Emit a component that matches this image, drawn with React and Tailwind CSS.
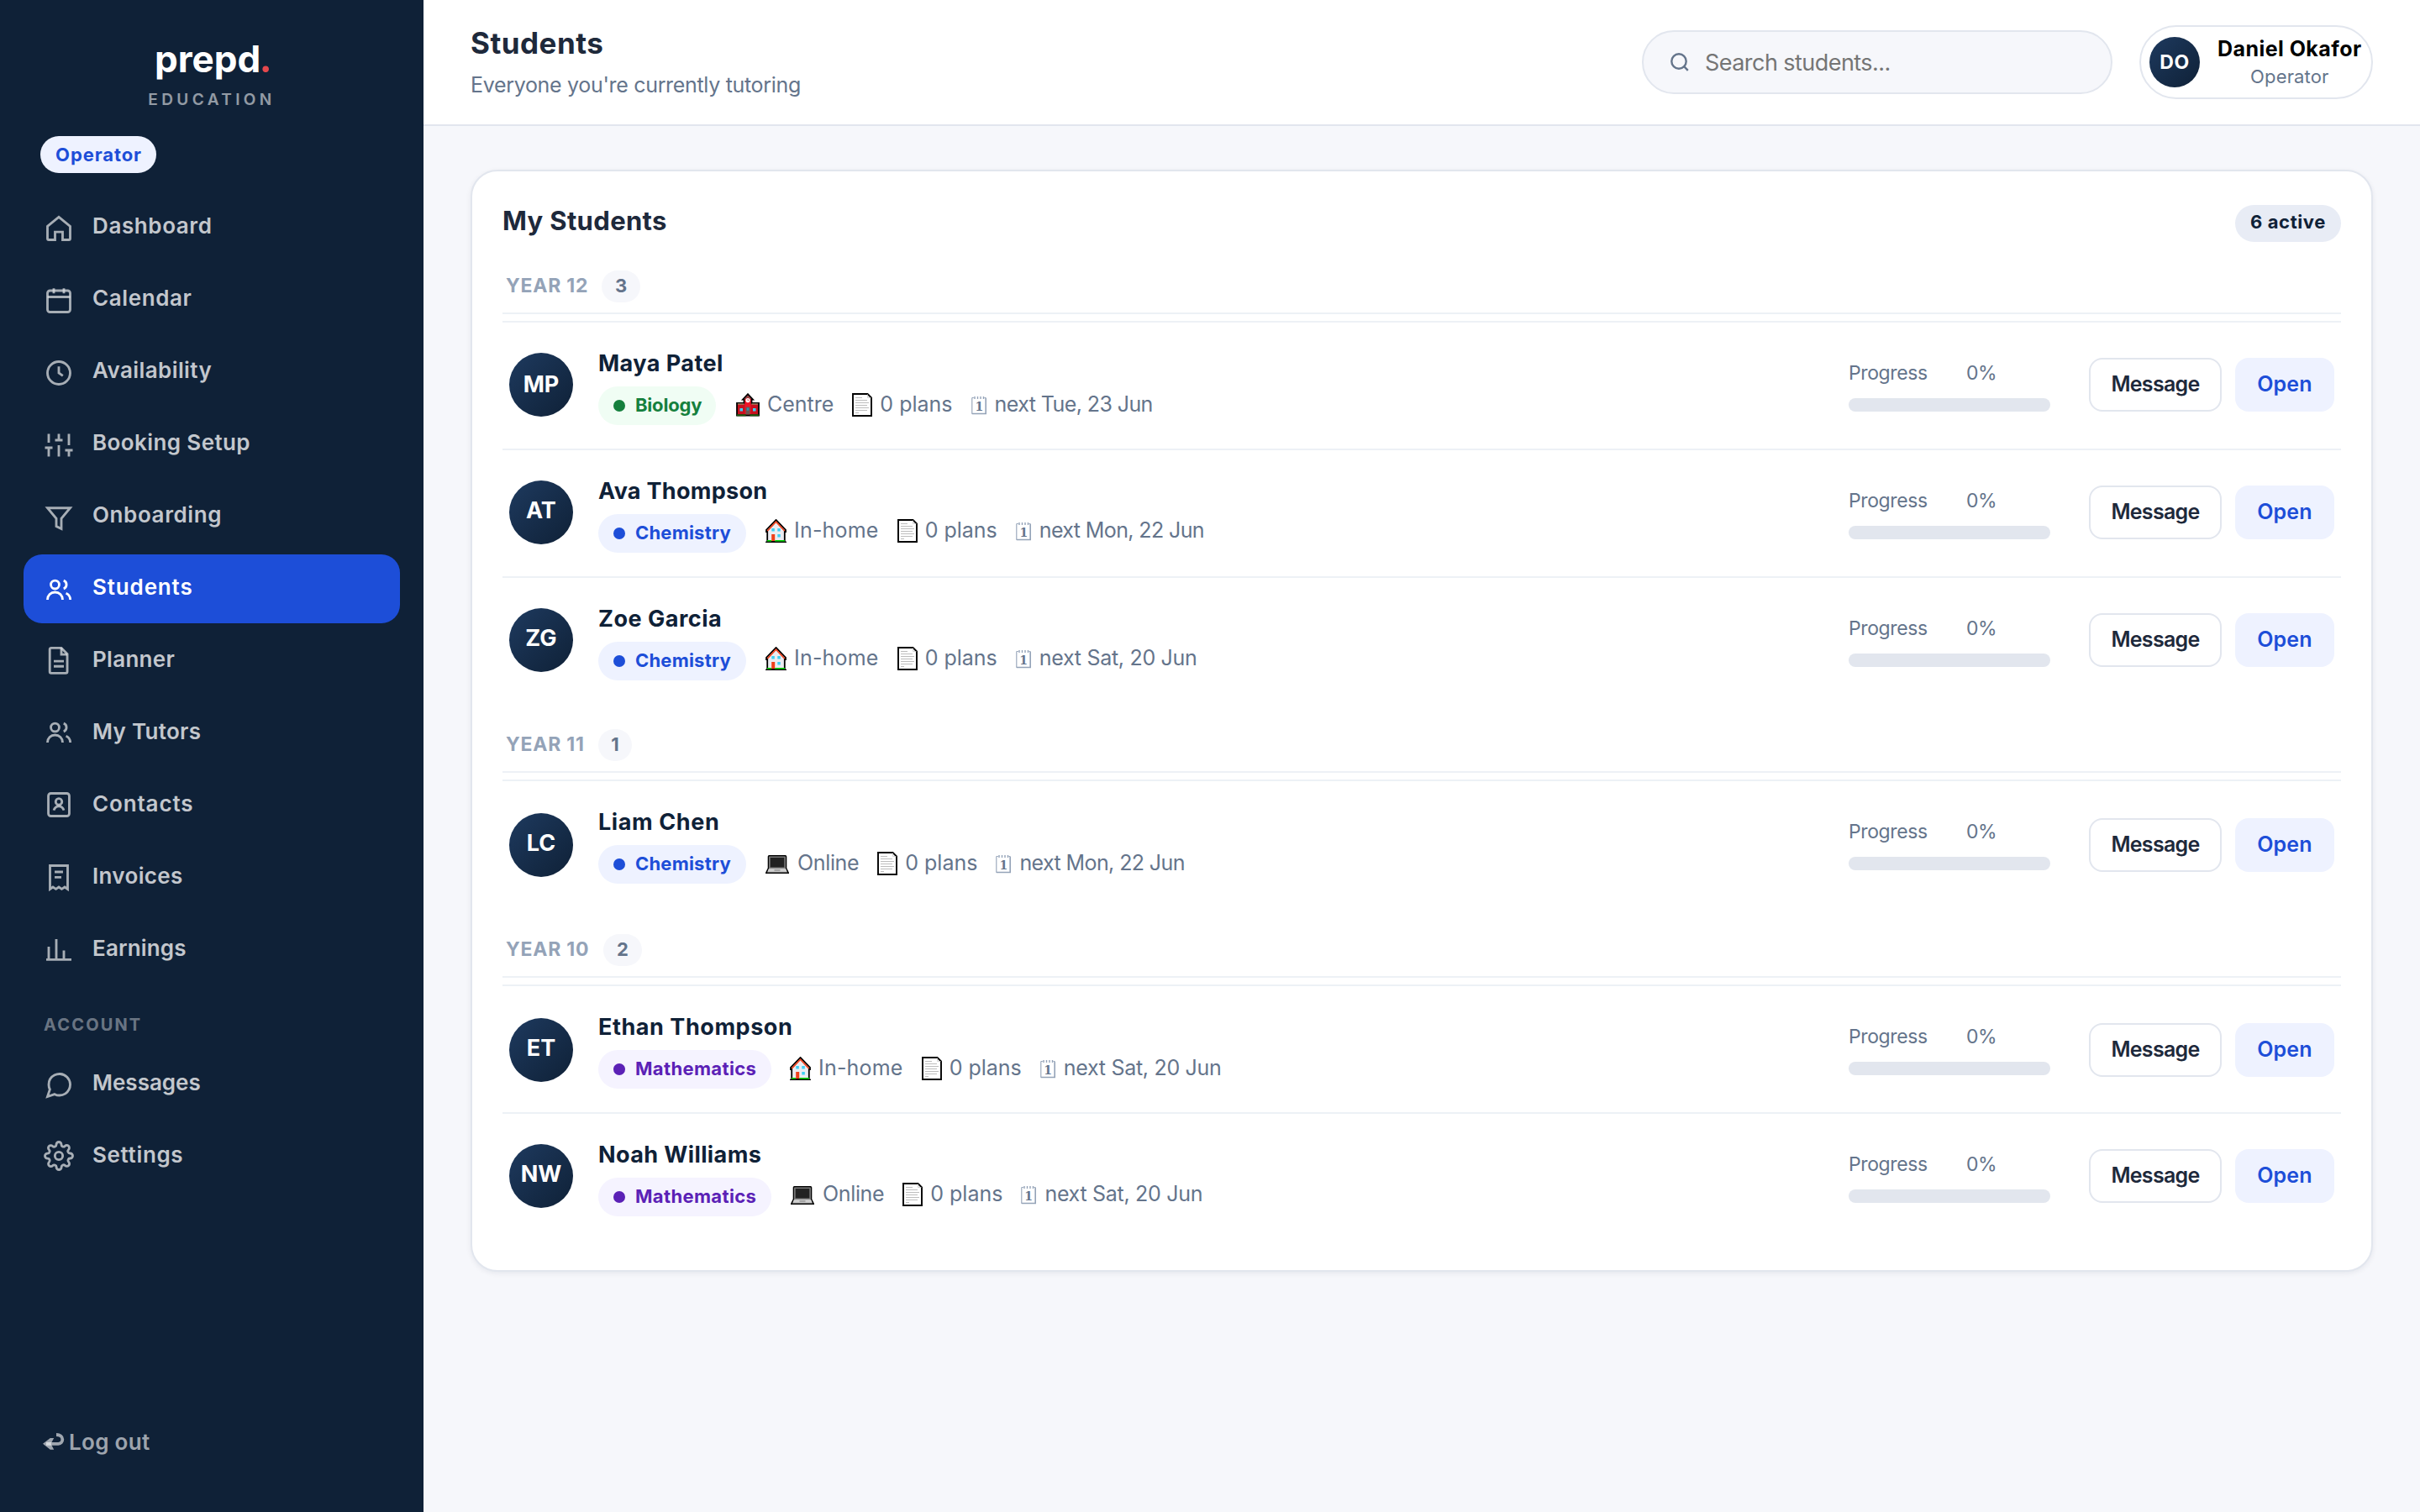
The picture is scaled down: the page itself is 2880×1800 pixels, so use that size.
const NAV = [
  { label: "Dashboard", icon: "home", nudge: "mt-[2px]", tracking: "tracking-[0.6px]" },
  { label: "Calendar", icon: "calendar", nudge: "mt-[2px]", tracking: "tracking-[0.6px]" },
  { label: "Availability", icon: "clock", nudge: "mt-[2px]", tracking: "tracking-[0.4px]" },
  { label: "Booking Setup", icon: "sliders", nudge: "mt-[2px]", tracking: "tracking-[0.4px]" },
  { label: "Onboarding", icon: "filter", nudge: "mt-[2px]", tracking: "tracking-[0.6px]" },
  { label: "Students", icon: "users", nudge: "mt-[2px]", tracking: "tracking-[0.85px]", active: true },
  { label: "Planner", icon: "file", nudge: "-mt-[2px]", tracking: "tracking-[0.3px]" },
  { label: "My Tutors", icon: "users", nudge: "-mt-[2px]", tracking: "tracking-[0.3px]" },
  { label: "Contacts", icon: "contact", nudge: "-mt-[2px]", tracking: "tracking-[0.85px]" },
  { label: "Invoices", icon: "receipt", nudge: "-mt-[2px]", tracking: "tracking-[0.35px]" },
  { label: "Earnings", icon: "chart", nudge: "-mt-[2px]", tracking: "tracking-[0.15px]" },
];

const ACCOUNT_NAV = [
  { label: "Messages", icon: "message", nudge: "mt-[2px]", tracking: "tracking-normal" },
  { label: "Settings", icon: "gear", nudge: "-mt-[2px]", tracking: "tracking-[0.65px]" },
];

const ICONS = {
  home: <path d="M3 10.3 12 2.9l9 7.4V20a1 1 0 0 1-1 1h-5v-6.3H9V21H4a1 1 0 0 1-1-1z" />,
  calendar: (
    <>
      <rect x="3" y="4" width="18" height="17" rx="2" />
      <path d="M3 9h18M8 2.2v4M16 2.2v4" />
    </>
  ),
  clock: (
    <>
      <circle cx="12" cy="12" r="9" />
      <path d="M12 6.8V12l3.2 2.2" />
    </>
  ),
  sliders: <path d="M4 21v-7M4 10V3M12 21v-9M12 8V3M20 21v-5M20 12V3M1 14h6M9 8h6M17 16h6" />,
  filter: <path d="M3 4.5h18l-7 8.4V21l-4-2v-6.1z" />,
  users: (
    <>
      <circle cx="9" cy="8" r="3.3" />
      <path d="M3 20c0-3.4 2.6-6 6-6s6 2.6 6 6M15.8 4.8a3.4 3.4 0 0 1 0 6.4M17.7 14.8c2 .8 3.4 2.8 3.4 5.2" />
    </>
  ),
  file: (
    <>
      <path d="M14 2.2H6a1.2 1.2 0 0 0-1.2 1.2V21A1.2 1.2 0 0 0 6 22.2h11.5a1.2 1.2 0 0 0 1.2-1.2V7z" />
      <path d="M14 2.2v5.2h4.7M8 12.7h8M8 16.8h8" />
    </>
  ),
  contact: (
    <>
      <rect x="3.7" y="3" width="16.6" height="18" rx="2" />
      <circle cx="12" cy="9.6" r="2.5" />
      <path d="M8 16.4c.7-2.2 2.2-3.2 4-3.2s3.3 1 4 3.2" />
    </>
  ),
  receipt: <path d="M5 3h14v18.6L16.7 20l-2.4 1.6L12 20l-2.3 1.6L7.3 20 5 21.6zM8.7 8h6.6M8.7 12.2H14" />,
  chart: <path d="M2 20.2h20M4 20.2V10M10 20.2V4M16 20.2V13" />,
  message: (
    <path d="M21 11.5a8.38 8.38 0 0 1-.9 3.8 8.5 8.5 0 0 1-7.6 4.7 8.38 8.38 0 0 1-3.8-.9L3 21l1.9-5.7a8.38 8.38 0 0 1-.9-3.8 8.5 8.5 0 0 1 4.7-7.6 8.38 8.38 0 0 1 3.8-.9h.5a8.48 8.48 0 0 1 8 8v.5z" />
  ),
  gear: (
    <>
      <circle cx="12" cy="12" r="3.1" />
      <path d="M19.4 15a1.65 1.65 0 0 0 .33 1.82l.06.06a2 2 0 0 1 0 2.83 2 2 0 0 1-2.83 0l-.06-.06a1.65 1.65 0 0 0-1.82-.33 1.65 1.65 0 0 0-1 1.51V21a2 2 0 0 1-2 2 2 2 0 0 1-2-2v-.09A1.65 1.65 0 0 0 9 19.4a1.65 1.65 0 0 0-1.82.33l-.06.06a2 2 0 0 1-2.83 0 2 2 0 0 1 0-2.83l.06-.06a1.65 1.65 0 0 0 .33-1.82 1.65 1.65 0 0 0-1.51-1H3a2 2 0 0 1-2-2 2 2 0 0 1 2-2h.09A1.65 1.65 0 0 0 4.6 9a1.65 1.65 0 0 0-.33-1.82l-.06-.06a2 2 0 0 1 0-2.83 2 2 0 0 1 2.83 0l.06.06a1.65 1.65 0 0 0 1.82.33H9a1.65 1.65 0 0 0 1-1.51V3a2 2 0 0 1 2-2 2 2 0 0 1 2 2v.09a1.65 1.65 0 0 0 1 1.51 1.65 1.65 0 0 0 1.82-.33l.06-.06a2 2 0 0 1 2.83 0 2 2 0 0 1 0 2.83l-.06.06a1.65 1.65 0 0 0-.33 1.82V9a1.65 1.65 0 0 0 1.51 1H21a2 2 0 0 1 2 2 2 2 0 0 1-2 2h-.09a1.65 1.65 0 0 0-1.51 1z" />
    </>
  ),
};

const SUBJECTS = {
  Biology: { pill: "w-[140px] bg-[#f0fdf4] text-[#15803d] tracking-[-0.2px]", dot: "bg-[#15803d]" },
  Chemistry: { pill: "w-[176px] bg-[#eef2ff] text-[#1d4ed8] tracking-[0.2px]", dot: "bg-[#1d4ed8]" },
  Mathematics: { pill: "w-[206px] bg-[#f5f3ff] text-[#5b21b6] tracking-[0.35px]", dot: "bg-[#5b21b6]" },
};

const PLACE_TRACKING = {
  Centre: "tracking-normal",
  "In-home": "tracking-[0.2px]",
  Online: "tracking-[-0.35px]",
};

const GROUPS = [
  {
    year: "YEAR 12",
    labelWidth: "w-[114px]",
    countWidth: "w-[46px]",
    margin: "",
    students: [
      { name: "Maya Patel", initials: "MP", subject: "Biology", place: "Centre", next: "next Tue, 23 Jun", tracking: "tracking-[0.45px]", nextTracking: "tracking-[-0.58px]", avatar: "mt-[36px] pb-0", meta: "ml-[24px] mt-px", buttons: "mt-[42px]" },
      { name: "Ava Thompson", initials: "AT", subject: "Chemistry", place: "In-home", next: "next Mon, 22 Jun", tracking: "tracking-[0.3px]", nextTracking: "tracking-[-0.62px]", avatar: "mt-[36px] pb-[3px]", meta: "ml-[23px] -mt-px", buttons: "mt-[42px]" },
      { name: "Zoe Garcia", initials: "ZG", subject: "Chemistry", place: "In-home", next: "next Sat, 20 Jun", tracking: "tracking-[0.5px]", nextTracking: "tracking-[-0.3px]", avatar: "mt-[36px] pb-[3px]", meta: "ml-[23px] -mt-px", buttons: "mt-[42px]" },
    ],
  },
  {
    year: "YEAR 11",
    labelWidth: "w-[110px]",
    countWidth: "w-[40px]",
    margin: "mt-[30px]",
    students: [
      { name: "Liam Chen", initials: "LC", subject: "Chemistry", place: "Online", next: "next Mon, 22 Jun", tracking: "tracking-[0.6px]", nextTracking: "tracking-[-0.6px]", avatar: "mt-[38px] pb-[3px]", meta: "ml-[23px] mt-px", buttons: "mt-[44px]" },
    ],
  },
  {
    year: "YEAR 10",
    labelWidth: "w-[116px]",
    countWidth: "w-[46px]",
    margin: "mt-[32px]",
    students: [
      { name: "Ethan Thompson", initials: "ET", subject: "Mathematics", place: "In-home", next: "next Sat, 20 Jun", tracking: "tracking-[0.55px]", nextTracking: "tracking-[-0.3px]", avatar: "mt-[38px] pb-[3px]", meta: "ml-[22px] mt-px", buttons: "mt-[44px]" },
      { name: "Noah Williams", initials: "NW", subject: "Mathematics", place: "Online", next: "next Sat, 20 Jun", tracking: "tracking-[0.4px]", nextTracking: "tracking-[-0.3px]", avatar: "mt-[36px] pb-[3px]", meta: "ml-[23px] -mt-px", buttons: "mt-[42px]" },
    ],
  },
];

function SchoolIcon() {
  return (
    <svg className="mr-[9px] h-7 w-7 shrink-0" viewBox="0 0 28 28">
      <path d="M1 12h8.500V7.500H8L14 1.200l6 6.300h-1.500V12H27v14.500H1z" fill="#c8101e" stroke="#000" strokeWidth="1.8" />
      <path d="M2 13h7.500M18.500 13H26" stroke="#a08060" strokeWidth="1.5" />
      <rect x="10.5" y="6.5" width="7" height="18.500" fill="#ee1428" />
      <path d="M10.500 7 14 3.300 17.500 7" fill="#a33" stroke="#666" strokeWidth="0.8" />
      <circle cx="14" cy="8.6" r="2.6" fill="#fff" />
      <path d="M14 7.200v1.600h1.200" fill="none" stroke="#c33" strokeWidth="0.8" />
      <path d="M4.500 18h3.500v3.500H4.500zM20 18h3.500v3.500H20z" fill="#3fd0f5" />
      <rect x="11.5" y="16.5" width="5" height="9" fill="#6b5550" />
      <rect x="12.7" y="17.5" width="2.6" height="3.2" fill="#2f8fae" />
      <path d="M1 26.200h10.500M16.500 26.200H27" stroke="#1c5a10" strokeWidth="2" />
    </svg>
  );
}

function HouseIcon() {
  return (
    <svg className="mr-[9px] h-7 w-[25px] shrink-0" viewBox="0 0 25 28">
      <path d="M12.5 1 24 12.8V15h-1.2v12H2.2V15H1v-2.2z" fill="#ececf2" stroke="#000" strokeWidth="1.8" />
      <path d="M2.3 14 12.5 3.2 22.7 14" fill="none" stroke="#f0401c" strokeWidth="1.7" />
      <path d="M7.3 11h3.5v3.6H7.3zM14.3 11h3.5v3.6h-3.5zM14.3 18h3.5v3.6h-3.5z" fill="#3fd0f5" />
      <rect x="7.2" y="18" width="4" height="8" fill="#f0401c" />
      <path d="M2 26h5M11.3 26H23" stroke="#00d000" strokeWidth="2" />
      <path d="M0 27.3h25" stroke="#000" strokeWidth="1.3" />
    </svg>
  );
}

function LaptopIcon() {
  return (
    <svg className="mt-[2px] mr-[10px] h-[22px] w-7 shrink-0" viewBox="0 0 28 22">
      <path d="M3.5 1.8q0-.9.9-.9h19.2q.9 0 .9.9v13.7l2.7 5.7H.8l2.700-5.700z" fill="#b9b9b9" stroke="#000" strokeWidth="1.6" />
      <rect x="4.3" y="1.7" width="19.4" height="14" fill="#777" />
      <rect x="5.7" y="3" width="16.6" height="11.5" fill="#222" />
      <path d="M3.7 16.6h20.6l1.2 3h-23z" fill="#cfcfcf" />
      <path d="M10.5 18h7" stroke="#888" strokeWidth="1.2" />
    </svg>
  );
}

function PageIcon() {
  return (
    <svg className="mr-[9px] h-7 w-6 shrink-0" viewBox="0 0 24 28">
      <path d="M1 1h17.500L23 5.500V27H1z" fill="#fff" stroke="#000" strokeWidth="1.9" />
      <path d="M18.500 1.500v4h4" fill="none" stroke="#ccc" strokeWidth="0.8" />
      <path d="M4 5.500h8M4 8.500h14M4 11.500h16M4 14.500h14M4 17.500h16M4 20.500h14M4 23.500h4" stroke="#bdbdbd" strokeWidth="1" />
    </svg>
  );
}

function NotepadIcon() {
  return (
    <svg className="mt-[2px] mr-[10px] h-[22px] w-[18px] shrink-0 overflow-visible" viewBox="0 0 18 22" fill="none" stroke="#94a3b8">
      <path d="M.8 1.500v19.300M.8 1.500h2M15.500 1.500h1.500" strokeWidth="1.1" />
      <path d="M.8 20.500h16.400V1.500" strokeWidth="1.6" />
      <path d="M4 0v3M7.500 0v3M11 0v3M14.500 0v3" strokeWidth="1.4" />
      <text x="9" y="16.5" textAnchor="middle" fill="#64748b" stroke="none" className="font-['DejaVu_Serif',serif] text-[14px] font-bold">1</text>
    </svg>
  );
}

function NavIcon({ name, className }) {
  return (
    <svg viewBox="0 0 24 24" fill="none" stroke="currentColor" strokeWidth="1.9" className={className}>
      {ICONS[name]}
    </svg>
  );
}

function NavItem({ item }) {
  const state = item.active ? "bg-[#1d4ed8] text-white" : "text-white/75";
  return (
    <a className={`flex h-[82px] items-center gap-[22px] rounded-[22px] pl-6 ${state}`}>
      <NavIcon name={item.icon} className={`h-9 w-9 shrink-0 ${item.nudge} ${item.active ? "" : "opacity-85"}`} />
      <span className={`-mt-[6px] text-[26px] font-semibold ${item.tracking}`}>{item.label}</span>
    </a>
  );
}

function Sidebar() {
  return (
    <aside className="flex h-[1800px] w-[504px] shrink-0 flex-col bg-[#0f2137] px-7">
      <div className="mt-[44px] h-[52px] pl-[2px] text-center text-[44px] leading-[52px] font-bold text-white">
        prepd<span className="font-['Lato'] text-[50px] leading-[40px] text-[#e5484d]">.</span>
      </div>
      <div className="mt-[11px] text-center text-[19px] leading-6 font-semibold tracking-[4.4px] text-white/55">EDUCATION</div>
      <div className="mt-[31px] ml-5 flex h-11 w-[138px] items-center justify-center rounded-full bg-[#eef2ff] pl-px text-[22px] font-bold tracking-[0.9px] text-[#1d4ed8]">
        Operator
      </div>
      <nav className="mt-6 flex flex-col gap-1">
        {NAV.map((item) => (
          <NavItem key={item.label} item={item} />
        ))}
      </nav>
      <div className="mt-[36px] mb-[18px] pl-6 text-[20px] leading-6 font-bold tracking-[2.15px] text-white/40">ACCOUNT</div>
      <nav className="flex flex-col gap-1">
        {ACCOUNT_NAV.map((item) => (
          <NavItem key={item.label} item={item} />
        ))}
      </nav>
      <a className="mt-auto mb-[65px] flex items-center gap-[5px] pl-[23px] text-[26px] leading-9 font-semibold tracking-[0.3px] text-white/60">
        <svg viewBox="0 0 26 20" className="-mt-[3px] h-5 w-[26px]">
          <path d="M4 12.8h14.5c2.8 0 4.8-2.2 4.8-5.2 0-3.400-2.900-5.600-7.300-5.600" fill="none" stroke="currentColor" strokeWidth="3.8" />
          <path d="M0 12.8 8.800 6h4.400l-3.700 6.800 3.700 6.900H8.800z" fill="currentColor" />
        </svg>
        Log out
      </a>
    </aside>
  );
}

function Header() {
  return (
    <header className="flex h-[150px] items-start border-b-2 border-[#e2e6ee] bg-white px-14">
      <div className="flex-1 pt-[29px]">
        <h1 className="text-[35px] leading-[44px] font-bold tracking-[0.5px] text-[#1e293b]">Students</h1>
        <p className="mt-[10px] text-[25px] leading-9 tracking-[-0.32px] text-[#64748b]">Everyone you're currently tutoring</p>
      </div>
      <div className="mt-9 flex h-[76px] w-[560px] items-center rounded-full border-2 border-[#e2e6ee] bg-[#f6f7fb] pl-[31px]">
        <svg viewBox="0 0 24 24" className="h-6 w-6" fill="none" stroke="#64748b" strokeWidth="2.4">
          <circle cx="11" cy="11" r="8.7" />
          <path d="m17.2 17.2 4.6 4.6" />
        </svg>
        <span className="mt-[2px] ml-[18px] text-[27px] tracking-[-0.55px] text-[#757575]">Search students...</span>
      </div>
      <div className="mt-[30px] ml-8 flex h-[88px] w-[278px] items-center rounded-full border-2 border-[#e2e6ee] bg-white pl-[10px]">
        <div className="flex h-[60px] w-[60px] shrink-0 items-center justify-center rounded-full bg-linear-135 from-[#1e3a5f] to-[#0f2137] text-[23px] font-bold tracking-[0.5px] text-white">
          DO
        </div>
        <div className="ml-[21px] text-center whitespace-nowrap">
          <div className="text-[25px] leading-8 font-bold tracking-[0.45px] text-black">Daniel Okafor</div>
          <div className="mt-px text-[22px] leading-8 tracking-[0.15px] text-[#64748b]">Operator</div>
        </div>
      </div>
    </header>
  );
}

function StudentRow({ student }) {
  const subject = SUBJECTS[student.subject];
  return (
    <div className="flex h-[152px] items-start border-t-2 border-[#edf1f6] px-2">
      <div className={`flex h-[76px] w-[76px] shrink-0 items-center justify-center rounded-full bg-linear-135 from-[#1e3a5f] to-[#0f2137] text-[27px] font-bold text-white ${student.avatar}`}>
        {student.initials}
      </div>
      <div className="ml-[30px] flex-1 pt-[31px]">
        <div className={`text-[27px] leading-9 font-bold text-[#0f2137] ${student.tracking}`}>{student.name}</div>
        <div className="mt-[9px] flex items-start text-[25px] whitespace-nowrap text-[#64748b]">
          <span className={`flex h-[46px] items-center rounded-full pb-px pl-[18px] text-[22px] font-bold ${subject.pill}`}>
            <i className={`mt-px mr-[12px] h-[14px] w-[14px] rounded-full ${subject.dot}`} />
            {student.subject}
          </span>
          <div className={`flex h-[42px] items-center gap-[22px] ${student.meta}`}>
            <span className={`flex items-center ${PLACE_TRACKING[student.place]}`}>
              {student.place === "Centre" && <SchoolIcon />}
              {student.place === "In-home" && <HouseIcon />}
              {student.place === "Online" && <LaptopIcon />}
              {student.place}
            </span>
            <span className="flex items-center">
              <PageIcon />0 plans
            </span>
            <span className={`flex items-center ${student.nextTracking}`}>
              <NotepadIcon />
              {student.next}
            </span>
          </div>
        </div>
      </div>
      <div className="w-60 pt-[46px] text-[23px] leading-7 text-[#64748b]">
        <div className="flex tracking-[-0.4px]">
          <span className="w-[140px]">Progress</span>
          <span>0%</span>
        </div>
        <div className="mt-4 h-4 rounded-lg bg-[#e2e6ee]" />
      </div>
      <div className={`ml-[46px] flex gap-4 text-[25px] font-semibold ${student.buttons}`}>
        <button className="h-16 w-[158px] rounded-[16px] border-2 border-[#e2e6ee] bg-white tracking-[-0.7px] text-[#1e293b]">Message</button>
        <button className="h-16 w-[118px] rounded-[16px] bg-[#eef2ff] tracking-[0.2px] text-[#1d4ed8]">Open</button>
      </div>
    </div>
  );
}

export default function App() {
  return (
    <div className="flex h-[1800px] w-[2880px] overflow-hidden bg-[#f6f7fb] font-['Inter',sans-serif]">
      <Sidebar />
      <main className="flex-1">
        <Header />
        <section className="mx-14 mt-[52px] rounded-[32px] border-2 border-[#e2e6ee] bg-white px-9 pt-10 pb-9 shadow-[0_2px_6px_rgba(15,33,55,0.07)]">
          <div className="mb-[34px] flex h-11 items-start justify-between">
            <h2 className="text-[31px] leading-[38px] font-bold tracking-[0.35px] text-[#1e293b]">My Students</h2>
            <span className="flex h-11 w-[126px] items-center justify-center rounded-full bg-[#e8ecf5] pb-[3px] text-[22px] font-bold tracking-[0.6px] text-[#0f2137]">
              6 active
            </span>
          </div>
          {GROUPS.map((group) => (
            <div key={group.year} className={group.margin}>
              <div className="mb-2 flex h-[52px] items-start border-b-2 border-[#edf1f6] pl-1 font-bold">
                <span className={`text-[23px] leading-[37px] tracking-[0.75px] whitespace-nowrap text-[#94a3b8] ${group.labelWidth}`}>{group.year}</span>
                <span className={`h-[38px] rounded-full bg-[#f6f7fb] text-center text-[22px] leading-[37px] text-[#64748b] ${group.countWidth}`}>
                  {group.students.length}
                </span>
              </div>
              {group.students.map((student) => (
                <StudentRow key={student.name} student={student} />
              ))}
            </div>
          ))}
        </section>
      </main>
    </div>
  );
}
